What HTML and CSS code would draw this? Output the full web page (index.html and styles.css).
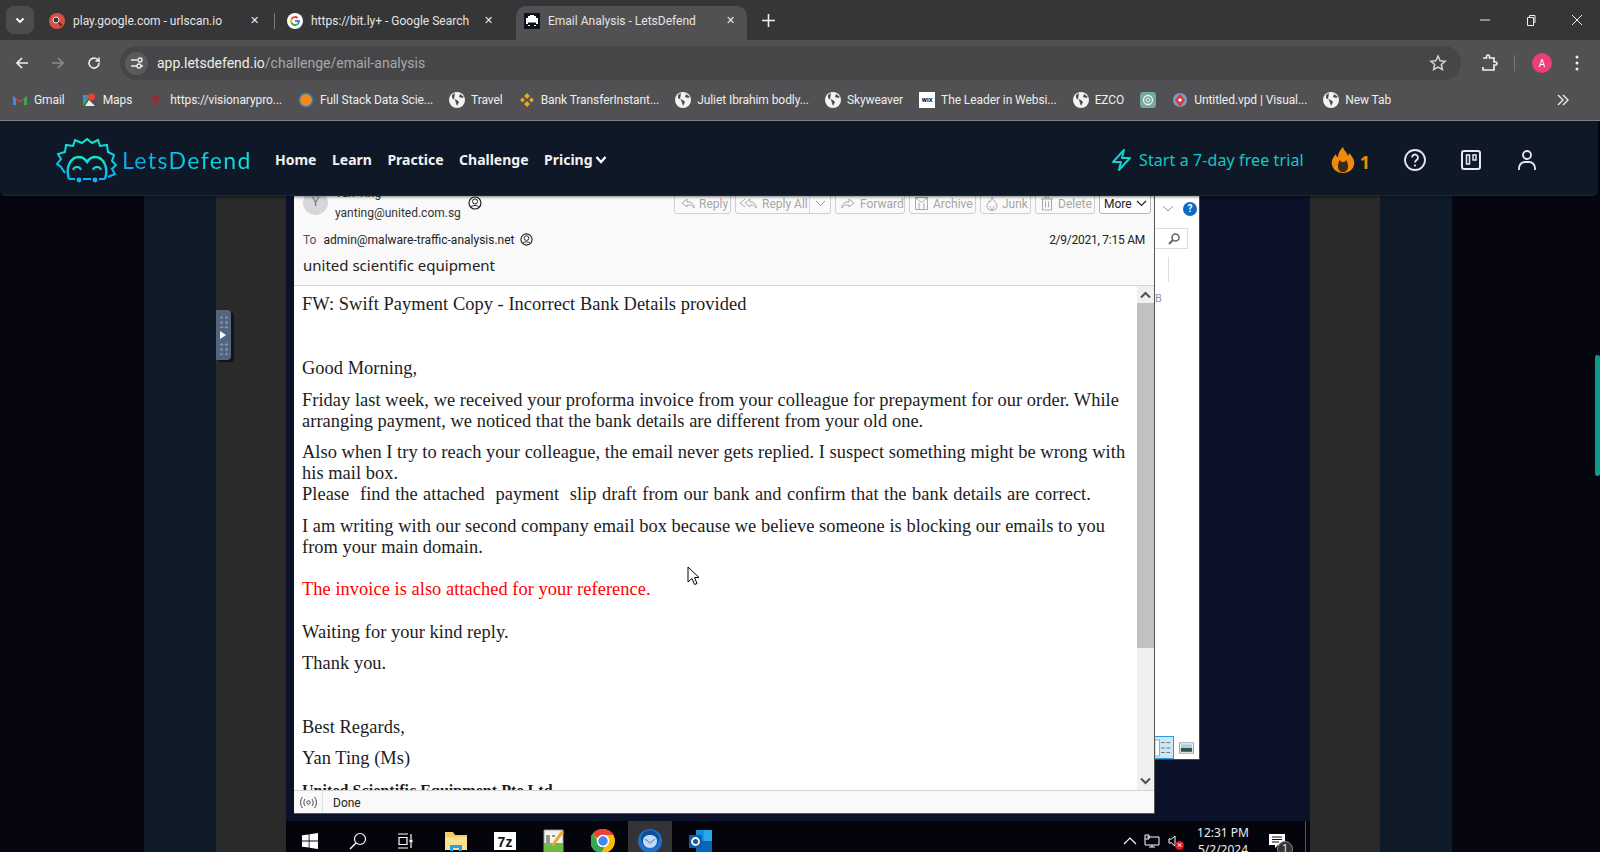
FILE: index.html
```html
<!DOCTYPE html>
<html lang="en">
<head>
    <meta charset="UTF-8">
    <title>Email Analysis - LetsDefend</title>
    <link rel="stylesheet" href="styles.css">
</head>
<body>
    <div class="tabstrip">
        <button class="tab-search"><svg width="12" height="12" viewBox="0 0 12 12"><path d="M2.500 4.500 6 8l3.500-3.500" fill="none" stroke="#fff" stroke-width="1.800"/></svg></button>
        <div class="tab">
            <svg class="fav" width="16" height="16" viewBox="0 0 16 16"><circle cx="8" cy="8" r="8" fill="#d9503f"/><circle cx="7" cy="7" r="3" fill="#35383c" stroke="#e8e8e8"/><path d="m9.500 9.500 3 3" stroke="#333" stroke-width="2"/></svg>
            <span class="tab-title">play.google.com - urlscan.io</span><span class="tab-x">✕</span>
        </div>
        <div class="tab-sep"></div>
        <div class="tab tab-two">
            <svg class="fav" width="16" height="16" viewBox="0 0 16 16"><circle cx="8" cy="8" r="8" fill="#fff"/><path d="M8 3a5 5 0 0 1 3.400 1.300L10 5.700A3 3 0 0 0 5.200 7L3.600 5.700A5 5 0 0 1 8 3z" fill="#ea4335"/><path d="M3.600 5.700 5.200 7a3 3 0 0 0 0 2L3.600 10.300a5 5 0 0 1 0-4.600z" fill="#fbbc05"/><path d="M3.600 10.300 5.200 9A3 3 0 0 0 10 10.400l1.500 1.200A5 5 0 0 1 3.600 10.300z" fill="#34a853"/><path d="M8 7h5v1.200a5 5 0 0 1-1.500 3.400L10 10.400A2 2 0 0 0 10.800 9H8z" fill="#4285f4"/></svg>
            <span class="tab-title">https://bit.ly+ - Google Search</span><span class="tab-x">✕</span>
        </div>
        <div class="tab tab-active">
            <svg class="fav" width="16" height="16" viewBox="0 0 16 16"><rect width="16" height="16" fill="#0c1420"/><path d="M6 2h4v1h2v2h2v6h-2v-1.500H4V11H2V5h2V3h2z" fill="#fff"/><path d="M4 12h2v1H4zM10 12h2v1h-2z" fill="#fff"/></svg>
            <span class="tab-title">Email Analysis - LetsDefend</span><span class="tab-x">✕</span>
        </div>
        <svg class="tab-new" width="13" height="13" viewBox="0 0 13 13"><path d="M6.500 0v13M0 6.500h13" stroke="#eee" stroke-width="1.600"/></svg>
        <div class="win-controls">
            <svg width="12" height="12" viewBox="0 0 12 12"><path d="M1 6h10" stroke="#eee"/></svg>
            <svg width="12" height="12" viewBox="0 0 12 12"><path d="M2.500 3.500h6v8h-6zM4.500 3.500v-2h5.500v7H8.500" fill="none" stroke="#eee"/></svg>
            <svg width="12" height="12" viewBox="0 0 12 12"><path d="m1 1 10 10M11 1 1 11" stroke="#eee"/></svg>
        </div>
    </div>

    <div class="toolbar">
        <svg class="nav" width="16" height="16" viewBox="0 0 16 16"><path d="M14 8H3M8 3 3 8l5 5" fill="none" stroke="#eee" stroke-width="1.700"/></svg>
        <svg class="nav" width="16" height="16" viewBox="0 0 16 16"><path d="M2 8h11M8 3l5 5-5 5" fill="none" stroke="#8b8b8d" stroke-width="1.700"/></svg>
        <svg class="nav" width="16" height="16" viewBox="0 0 16 16"><path d="M13 8a5 5 0 1 1-1.500-3.500L13 6V2.500M13 6H9.500" fill="none" stroke="#eee" stroke-width="1.600"/></svg>
        <div class="omnibox">
            <span class="site-chip"><svg width="16" height="16" viewBox="0 0 16 16"><path d="M2 5h6M12 11h2M2 11h6" stroke="#eee" stroke-width="1.400"/><circle cx="11" cy="5" r="2" fill="none" stroke="#eee" stroke-width="1.400"/><circle cx="10" cy="11" r="2" fill="none" stroke="#eee" stroke-width="1.400"/></svg></span>
            <span class="url">app.letsdefend.io<span class="url-path">/challenge/email-analysis</span></span>
            <svg class="star" width="18" height="18" viewBox="0 0 18 18"><path d="m9 2 2.100 4.700 5 .5-3.800 3.300 1.100 5L9 13l-4.400 2.500 1.100-5L1.900 7.200l5-.5z" fill="none" stroke="#d5d5d5" stroke-width="1.500"/></svg>
        </div>
        <svg class="ext" width="18" height="18" viewBox="0 0 18 18"><path d="M3 4h3.500V2.500a1.500 1.500 0 0 1 3 0V4H14v4h1.500a1.500 1.500 0 0 1 0 3H14v5H3v-3" fill="none" stroke="#eee" stroke-width="1.700"/></svg>
        <div class="tool-sep"></div>
        <span class="avatar">A</span>
        <svg class="kebab" width="4" height="16" viewBox="0 0 4 16"><circle cx="2" cy="2" r="1.500" fill="#eee"/><circle cx="2" cy="8" r="1.500" fill="#eee"/><circle cx="2" cy="14" r="1.500" fill="#eee"/></svg>
    </div>

    <div class="bookmarks">
        <span class="bm"><svg width="16" height="16" viewBox="0 0 16 16"><path d="M1 13V4l7 5 7-5v9h-3V7.500L8 10.500 4 7.500V13z" fill="#ea4335"/><path d="M1 13V4l3 2.500V13z" fill="#4285f4"/><path d="M15 13V4l-3 2.500V13z" fill="#34a853"/></svg>Gmail</span>
        <span class="bm"><svg width="16" height="16" viewBox="0 0 16 16"><path d="M2 3h6l-2 6-4 5z" fill="#34a853"/><path d="M8 8l6 6H4z" fill="#eee"/><circle cx="10.500" cy="5" r="3.500" fill="#ea4335"/><path d="M2 3h5L2 9z" fill="#4285f4"/></svg>Maps</span>
        <span class="bm"><svg width="16" height="16" viewBox="0 0 16 16"><path d="M8 1v14M4 3l4 8 4-8M3 6h10" fill="none" stroke="#a9262a" stroke-width="1.300"/></svg>https://visionarypro...</span>
        <span class="bm"><svg width="16" height="18" viewBox="0 0 16 18"><circle cx="8" cy="9" r="7.500" fill="#2a7ab8"/><circle cx="8" cy="9" r="6" fill="#f08a1d"/></svg>Full Stack Data Scie...</span>
        <span class="bm"><svg class="globe" width="16" height="16" viewBox="0 0 16 16"><circle cx="8" cy="8" r="8" fill="#f2f2f2"/><path d="M6 1 3 3v3l3 2 1 3 1 3 2-4-2-2-3-1zM11 2l-1 3 3 1 2-1z" fill="#4f4f51"/></svg>Travel</span>
        <span class="bm"><svg width="16" height="16" viewBox="0 0 16 16"><path d="M8 1 11 4 8 7 5 4zM3.500 5.500 6 8l-2.500 2.500L1 8zM12.500 5.500 15 8l-2.500 2.500L10 8zM8 9l3 3-3 3-3-3z" fill="#e5a823"/></svg>Bank TransferInstant...</span>
        <span class="bm"><svg class="globe" width="16" height="16" viewBox="0 0 16 16"><circle cx="8" cy="8" r="8" fill="#f2f2f2"/><path d="M6 1 3 3v3l3 2 1 3 1 3 2-4-2-2-3-1zM11 2l-1 3 3 1 2-1z" fill="#4f4f51"/></svg>Juliet Ibrahim bodly...</span>
        <span class="bm"><svg class="globe" width="16" height="16" viewBox="0 0 16 16"><circle cx="8" cy="8" r="8" fill="#f2f2f2"/><path d="M6 1 3 3v3l3 2 1 3 1 3 2-4-2-2-3-1zM11 2l-1 3 3 1 2-1z" fill="#4f4f51"/></svg>Skyweaver</span>
        <span class="bm"><span class="wix">WIX</span>The Leader in Websi...</span>
        <span class="bm"><svg class="globe" width="16" height="16" viewBox="0 0 16 16"><circle cx="8" cy="8" r="8" fill="#f2f2f2"/><path d="M6 1 3 3v3l3 2 1 3 1 3 2-4-2-2-3-1zM11 2l-1 3 3 1 2-1z" fill="#4f4f51"/></svg>EZCO</span>
        <span class="bm"><svg width="16" height="16" viewBox="0 0 16 16"><rect width="16" height="16" rx="3" fill="#74aa9c"/><circle cx="8" cy="8" r="4.500" fill="none" stroke="#e8f3f0" stroke-width="1.300"/><circle cx="8" cy="8" r="2" fill="none" stroke="#e8f3f0"/></svg></span>
        <span class="bm"><svg width="16" height="16" viewBox="0 0 16 16"><circle cx="8" cy="8" r="7" fill="#7b9bc4"/><path d="M8 2l5 6-5 7-5-7z" fill="#d63c3c"/><path d="M8 6l2 2-2 2-2-2z" fill="#fff"/></svg>Untitled.vpd | Visual...</span>
        <span class="bm"><svg class="globe" width="16" height="16" viewBox="0 0 16 16"><circle cx="8" cy="8" r="8" fill="#f2f2f2"/><path d="M6 1 3 3v3l3 2 1 3 1 3 2-4-2-2-3-1zM11 2l-1 3 3 1 2-1z" fill="#4f4f51"/></svg>New Tab</span>
        <svg class="more-bm" width="14" height="14" viewBox="0 0 14 14"><path d="m2 2 5 5-5 5M7 2l5 5-5 5" fill="none" stroke="#eee" stroke-width="1.400"/></svg>
    </div>

    <div class="page">
        <header class="site-nav">
            <div class="logo">
                <svg width="62" height="46" viewBox="0 0 62 46">
                    <defs><linearGradient id="lg" x1="0" y1="0" x2="0" y2="1"><stop offset="0" stop-color="#10e8cc"/><stop offset="1" stop-color="#06b4f8"/></linearGradient></defs>
                    <path d="M9 36 5 30l-4-3 4-5-3-5 7-2 1-7 7 1 2-6 7 3 5-4 5 4 6-3 2 6 7-1 1 7 6 3-2 6 4 4-4 4 3 5-7 3" fill="none" stroke="url(#lg)" stroke-width="2"/>
                    <path d="M13 42c-4-12 2-22 10-22 4 0 6 2 8 5 2-3 4-5 8-5 8 0 14 10 10 22" fill="none" stroke="url(#lg)" stroke-width="2.400"/>
                    <path d="M17 33c1-4 7-4 8 0M37 33c1-4 7-4 8 0" fill="none" stroke="url(#lg)" stroke-width="2.200"/>
                    <path d="M13 42h6M27 42h8M43 42h6" stroke="#06b4f8" stroke-width="2.200"/>
                    <circle cx="23" cy="43" r="2.400" fill="#06b4f8"/><circle cx="39" cy="43" r="2.400" fill="#06b4f8"/>
                </svg>
                <span class="logo-text">LetsDefend</span>
            </div>
            <nav class="nav-links">
                <span>Home</span><span>Learn</span><span>Practice</span><span>Challenge</span>
                <span class="pricing">Pricing<svg width="12" height="10" viewBox="0 0 12 10"><path d="m1.500 2 4.500 5 4.500-5" fill="none" stroke="#fff" stroke-width="2.400"/></svg></span>
            </nav>
            <div class="nav-right">
                <span class="trial"><svg width="22" height="24" viewBox="0 0 22 24"><path d="M13 2 2 14h8l-2 8 11-12h-8z" fill="none" stroke="#12d3cc" stroke-width="2" stroke-linejoin="round"/></svg>Start a 7-day free trial</span>
                <span class="streak"><svg width="26" height="28" viewBox="0 0 26 28"><path d="M13 1c1 4 4 5 5 9 1-1 1-3 1-3 4 4 6 8 5 12-1 5-6 8-11 8S3 24 2 19C1 15 3 11 6 8c0 2 1 3 2 3 0-4 2-7 5-10z" fill="#f08a0c"/><path d="M13 26c-3 0-5-2-5-6 0-3 1-5 2-6 1 2 2 2 3 2 1 0 2 0 3-2 1 1 2 3 2 6 0 4-2 6-5 6z" fill="#3a2a16"/></svg><b>1</b></span>
                <svg class="nav-ico" width="24" height="24" viewBox="0 0 24 24"><circle cx="12" cy="12" r="10" fill="none" stroke="#e6e9ee" stroke-width="1.800"/><path d="M9 9.500a3 3 0 1 1 4.500 2.600c-1 .6-1.500 1.200-1.500 2.400" fill="none" stroke="#e6e9ee" stroke-width="1.800"/><circle cx="12" cy="17.500" r="1.100" fill="#e6e9ee"/></svg>
                <svg class="nav-ico" width="24" height="24" viewBox="0 0 24 24"><rect x="3" y="3" width="18" height="18" rx="2" fill="none" stroke="#e6e9ee" stroke-width="2"/><path d="M7.500 7h3v9h-3zM14 7h3v5h-3z" fill="none" stroke="#e6e9ee" stroke-width="1.500"/></svg>
                <svg class="nav-ico" width="24" height="24" viewBox="0 0 24 24"><circle cx="12" cy="7" r="4" fill="none" stroke="#e6e9ee" stroke-width="1.800"/><path d="M4 22v-2a6 6 0 0 1 6-6h4a6 6 0 0 1 6 6v2" fill="none" stroke="#e6e9ee" stroke-width="1.800"/></svg>
            </div>
        </header>

        <div class="stage">
            <div class="band band-black"></div>
            <div class="band band-slate"></div>
            <div class="band band-grey"></div>
            <div class="desktop">
                <div class="back-window">
                    <svg class="bw-chev" width="12" height="8" viewBox="0 0 12 8"><path d="m1 1 5 5 5-5" fill="none" stroke="#999"/></svg>
                    <span class="bw-help">?</span>
                    <div class="bw-search"><svg width="14" height="14" viewBox="0 0 14 14"><circle cx="8.500" cy="5.500" r="3.500" fill="none" stroke="#666" stroke-width="1.600"/><path d="M6 8 2 12" stroke="#666" stroke-width="2"/></svg></div>
                    <div class="bw-rule"></div>
                    <span class="bw-b">B</span>
                    <div class="bw-views">
                        <span class="bw-view-on"><svg width="18" height="20" viewBox="0 0 20 22"><rect x="1" y="2" width="5" height="18" fill="#fff" stroke="#999"/><path d="M8 5h4M14 5h4M8 11h4M14 11h4M8 16h4M14 16h4" stroke="#666"/></svg></span>
                        <svg width="15" height="12" viewBox="0 0 16 12"><rect x=".5" y=".5" width="15" height="11" fill="#fff" stroke="#999"/><rect x="2" y="2" width="12" height="8" fill="#a8d0e8"/><rect x="2" y="6" width="12" height="4" fill="#2f5548"/></svg>
                    </div>
                </div>
                <div class="mail-window">
                    <div class="mail-head">
                        <div class="mail-from">
                            <span class="sender-pic">Y</span>
                            <div class="sender-lines">
                                <span class="sender-name">Yan Ting</span>
                                <span class="sender-mail">yanting@united.com.sg</span>
                            </div>
                            <svg class="contact" width="14" height="14" viewBox="0 0 14 14"><circle cx="7" cy="7" r="6" fill="none" stroke="#222" stroke-width="1.200"/><circle cx="7" cy="5.500" r="2.500" fill="none" stroke="#222"/><path d="M3 11c1-2 7-2 8 0" fill="none" stroke="#222"/></svg>
                            <div class="mail-actions">
                                <span class="act act-reply"><svg width="15" height="14" viewBox="0 0 15 14"><path d="M7 2 2 6l5 4V8h3c2 0 3 1 4 3 0-4-2-6-5-6H7z" fill="none" stroke="#aaa"/></svg>Reply</span>
                                <span class="act act-split"><span class="act-main"><svg width="19" height="14" viewBox="0 0 19 14"><path d="M6 2 1 6l5 4M11 2 6 6l5 4V8h2c2 0 3 1 4 3 0-4-2-6-5-6h-1z" fill="none" stroke="#aaa"/></svg>Reply All</span><span class="act-drop"><svg width="11" height="7" viewBox="0 0 11 7"><path d="m1 1 4.500 4.500L10 1" fill="none" stroke="#999"/></svg></span></span>
                                <span class="act act-forward"><svg width="15" height="14" viewBox="0 0 15 14"><path d="m8 2 5 4-5 4V8H5c-2 0-3 1-4 3 0-4 2-6 5-6h2z" fill="none" stroke="#aaa"/></svg>Forward</span>
                                <span class="act act-archive"><svg width="15" height="15" viewBox="0 0 15 15"><path d="M1.500 1.500h12v12h-12zM1.500 1.500l6 5 6-5M5 7v6M10 7v6" fill="none" stroke="#aaa"/></svg>Archive</span>
                                <span class="act act-junk"><svg width="14" height="15" viewBox="0 0 14 15"><path d="M7 1c0 3 5 5 5 9a5 4.500 0 0 1-10 0c0-3 2-3 2-5 1 0 1 1 1 1 1-2 2-3 2-5zM7 14c-1-2-2-3-2-4M7 14c1-2 2-3 2-4" fill="none" stroke="#aaa"/></svg>Junk</span>
                                <span class="act act-delete"><svg width="14" height="15" viewBox="0 0 14 15"><path d="M1 3h12M5 3V1h4v2M2.500 3v11h9V3M5.500 5.500v6M8.500 5.500v6" fill="none" stroke="#aaa"/></svg>Delete</span>
                                <span class="act act-more">More<svg width="11" height="7" viewBox="0 0 11 7"><path d="m1 1 4.500 4.500L10 1" fill="none" stroke="#222" stroke-width="1.200"/></svg></span>
                            </div>
                        </div>
                        <div class="mail-to">
                            <span class="to-label">To</span>
                            <span class="to-addr">admin@malware-traffic-analysis.net</span>
                            <svg width="13" height="13" viewBox="0 0 14 14"><circle cx="7" cy="7" r="6" fill="none" stroke="#222" stroke-width="1.200"/><circle cx="7" cy="5.500" r="2.500" fill="none" stroke="#222"/><path d="M3 11c1-2 7-2 8 0" fill="none" stroke="#222"/></svg>
                            <span class="mail-date">2/9/2021, 7:15 AM</span>
                        </div>
                        <div class="mail-subject">united scientific equipment</div>
                    </div>
                    <div class="mail-mid">
                        <div class="mail-body">
                            <p>FW: Swift Payment Copy - Incorrect Bank Details provided</p>
                            <p class="gap-large">Good Morning,</p>
                            <p>Friday last week, we received your proforma invoice from your colleague for prepayment for our order. While<br>arranging payment, we noticed that the bank details are different from your old one.</p>
                            <p>Also when I try to reach your colleague, the email never gets replied. I suspect something might be wrong with<br>his mail box.<br><span class="spaced">Please&nbsp; find the attached&nbsp; payment&nbsp; slip draft from our bank and confirm that the bank details are correct.</span></p>
                            <p>I am writing with our second company email box because we believe someone is blocking our emails to you<br>from your main domain.</p>
                            <p class="warn">The invoice is also attached for your reference.</p>
                            <p class="gap-small">Waiting for your kind reply.</p>
                            <p>Thank you.</p>
                            <p class="gap-large tight">Best Regards,</p>
                            <p>Yan Ting (Ms)</p>
                            <p class="company">United Scientific Equipment Pte Ltd</p>
                        </div>
                        <div class="mail-scroll">
                            <svg width="11" height="8" viewBox="0 0 11 8"><path d="m1 6.500 4.500-4.500L10 6.500" fill="none" stroke="#505050" stroke-width="2"/></svg>
                            <div class="mail-track"><div class="mail-thumb"></div></div>
                            <svg width="11" height="8" viewBox="0 0 11 8"><path d="m1 1.500 4.500 4.500L10 1.500" fill="none" stroke="#505050" stroke-width="2"/></svg>
                        </div>
                    </div>
                    <div class="mail-status">
                        <span class="status-ico"><svg width="17" height="13" viewBox="0 0 17 13"><circle cx="8.500" cy="6.500" r="1.700" fill="none" stroke="#444"/><path d="M5 3c-1.500 2-1.500 5 0 7M12 3c1.500 2 1.500 5 0 7M2.500 1C0 4 0 9 2.500 12M14.500 1C17 4 17 9 14.500 12" fill="none" stroke="#444"/></svg></span>
                        <span class="status-text">Done</span>
                    </div>
                </div>
                <svg class="cursor" width="14" height="21" viewBox="0 0 14 21"><path d="M1 1v15l4-3.500 2.500 6 2.500-1-2.500-6H12z" fill="#fff" stroke="#000"/></svg>
                <div class="taskbar">
                    <svg class="tb-win" width="16" height="16" viewBox="0 0 16 16"><path d="M0 2.300 6.700 1.400V7.600H0zM7.500 1.300 16 0V7.600H7.500zM0 8.400H6.700V14.600L0 13.700zM7.500 8.400H16V16L7.500 14.700z" fill="#fff"/></svg>
                    <svg class="tb-search" width="18" height="18" viewBox="0 0 18 18"><circle cx="11" cy="7" r="5.500" fill="none" stroke="#fff" stroke-width="1.200"/><path d="M7 11 1 17" stroke="#fff" stroke-width="1.400"/></svg>
                    <svg class="tb-view" width="16" height="16" viewBox="0 0 16 16"><path d="M1 1h10M1 15h10M2 4.500h8v7H2z" fill="none" stroke="#fff" stroke-width="1.200"/><path d="M14 1v5M14 10v5" stroke="#fff" stroke-width="1.200"/><rect x="12.500" y="6.500" width="3" height="3" fill="#fff"/></svg>
                    <svg class="tb-files" width="22" height="20" viewBox="0 0 22 20"><path d="M0 1h8l2 3h12v15H0z" fill="#f4cd68"/><path d="M0 6h22v13H0z" fill="#fbe08f"/><path d="M5 14h12v6H14v-3H8v3H5z" fill="#2aa3dc"/></svg>
                    <span class="tb-7z"><b>7</b>z</span>
                    <svg class="tb-notes" width="22" height="24" viewBox="0 0 22 24"><path d="M1 1h19v22H1z" fill="#f4f4ec" stroke="#999"/><path d="M1 14h19v9H1z" fill="#6dbb45"/><path d="M4 6v8M6 6v8M9 7h3" stroke="#333"/><path d="M8 16 18 2l3 1-10 14z" fill="#e8a73a"/></svg>
                    <svg class="tb-chrome" width="24" height="24" viewBox="0 0 24 24"><circle cx="12" cy="12" r="12" fill="#fbbc05"/><path d="M12 0a12 12 0 0 1 10.400 6H12a6 6 0 0 0-5.600 3.800L2 4a12 12 0 0 1 10-4z" fill="#ea4335"/><path d="M2 4l4.800 8.400a6 6 0 0 0 6.800 5.300L10 24A12 12 0 0 1 2 4z" fill="#34a853"/><circle cx="12" cy="12" r="5.500" fill="#4285f4" stroke="#fff" stroke-width="1.500"/></svg>
                    <span class="tb-active"><svg width="24" height="24" viewBox="0 0 24 24"><circle cx="12" cy="12" r="12" fill="#1f6fc4"/><circle cx="12" cy="10" r="9" fill="#0b4f9e"/><path d="M5 12c0-4 3-6 7-6s7 2 7 6c0 4-3 7-7 7s-7-3-7-7z" fill="#c6dcf5"/><path d="M7 10l5 4 5-4" fill="none" stroke="#6aa0dc" stroke-width="1.500"/></svg></span>
                    <svg class="tb-outlook" width="24" height="24" viewBox="0 0 24 24"><rect x="7" y="1" width="16" height="22" fill="#1490df"/><rect x="15" y="1" width="8" height="11" fill="#28a8ea"/><path d="M7 12h16v11H7z" fill="#0a64b8"/><rect y="6" width="13" height="13" fill="#0f5fa8"/><circle cx="6.500" cy="12.500" r="3.500" fill="none" stroke="#fff" stroke-width="1.800"/></svg>
                    <div class="tray">
                        <svg width="14" height="8" viewBox="0 0 14 8"><path d="m1 7 6-6 6 6" fill="none" stroke="#fff" stroke-width="1.100"/></svg>
                        <svg class="tray-net" width="16" height="14" viewBox="0 0 16 14"><path d="M3 3h12v8H1V1h4v4H1M8 11v2M5 13h6" fill="none" stroke="#fff"/></svg>
                        <span class="vol"><svg width="8" height="12" viewBox="0 0 8 12"><path d="M1 4h2.500L7 1v10L3.500 8H1z" fill="none" stroke="#fff"/></svg><span class="vol-x">×</span></span>
                        <span class="clock"><span>12:31 PM</span><span>5/2/2024</span></span>
                        <span class="notif"><svg width="16" height="14" viewBox="0 0 16 14"><path d="M0 0h16v11H9l-3 3v-3H0z" fill="#fff"/><path d="M3 3h10M3 5.500h10M3 8h7" stroke="#111"/></svg><span class="notif-badge">1</span></span>
                    </div>
                </div>
            </div>
            <div class="band band-grey"></div>
            <div class="band band-slate"></div>
            <div class="band band-black band-last"><div class="page-scroll"></div></div>
            <div class="drawer-handle">
                <span class="dots"></span>
                <svg width="7" height="8" viewBox="0 0 7 8"><path d="M0 0 6 4 0 8z" fill="#fff"/></svg>
                <span class="dots"></span>
            </div>
        </div>
    </div>
</body>
</html>
```
FILE: styles.css
```css
* {
    box-sizing: border-box;
}
html, body {
    margin: 0;
    height: 852px;
    overflow: hidden;
}
body {
    font-family: Roboto, "Noto Sans", sans-serif;
    display: flex;
    flex-direction: column;
    background: #05060f;
}

/* chrome */
.tabstrip {
    height: 40px;
    background: #363638;
    display: flex;
    align-items: flex-end;
    position: relative;
}
.tab-search {
    width: 28px;
    height: 28px;
    margin: 0 3px 6px 6px;
    border: none;
    border-radius: 8px;
    background: #4d4d50;
    padding: 0;
    display: flex;
    align-items: center;
    justify-content: center;
}
.tab {
    width: 237px;
    height: 34px;
    display: flex;
    align-items: center;
    padding: 0 12px 5px 12px;
    color: #e4e4e4;
    font-size: 12px;
}
.fav {
    flex: none;
    margin-right: 8px;
}
.tab-title {
    flex: 1;
    white-space: nowrap;
}
.tab-x {
    font-size: 11px;
    color: #e8e8e8;
    width: 12px;
}
.tab-sep {
    width: 1px;
    height: 16px;
    background: #777;
    margin: 0 0 11px 0;
}
.tab-two {
    width: 233px;
}
.tab-active {
    width: 231px;
    margin-left: 8px;
    background: #515153;
    border-radius: 10px 10px 0 0;
    padding: 0 9px 5px 8px;
}
.tab-new {
    margin: 0 0 13px 15px;
}
.win-controls {
    margin-left: auto;
    display: flex;
    gap: 34px;
    padding: 0 17px 14px 0;
}
.toolbar {
    height: 40px;
    background: #515153;
    display: flex;
    align-items: center;
    padding: 6px 0 0 14px;
}
.nav {
    margin-right: 20px;
}
.omnibox {
    width: 1341px;
    height: 34px;
    margin-left: -2px;
    border-radius: 17px;
    background: #464648;
    display: flex;
    align-items: center;
    padding: 0 14px 0 5px;
}
.site-chip {
    width: 23px;
    height: 23px;
    border-radius: 50%;
    background: #5a5a5c;
    display: flex;
    align-items: center;
    justify-content: center;
    margin-right: 9px;
}
.url {
    color: #eee;
    font-size: 14px;
}
.url-path {
    color: #a8a8a8;
}
.star {
    margin-left: auto;
}
.ext {
    margin-left: 19px;
}
.tool-sep {
    width: 1px;
    height: 16px;
    background: #777;
    margin-left: 16px;
}
.avatar {
    width: 20px;
    height: 20px;
    border-radius: 50%;
    background: #ea3f78;
    color: #fff;
    font-size: 10px;
    display: flex;
    align-items: center;
    justify-content: center;
    margin-left: 17px;
}
.kebab {
    margin-left: 23px;
}
.bookmarks {
    height: 41px;
    background: #515153;
    border-bottom: 1px solid #8a8a8a;
    display: flex;
    align-items: center;
    padding-left: 12px;
    color: #eee;
    font-size: 12px;
    letter-spacing: -.08px;
}
.bm {
    display: flex;
    align-items: center;
    gap: 6px;
    margin-right: 16px;
    white-space: nowrap;
}
.wix {
    width: 16px;
    height: 16px;
    background: #fff;
    color: #000;
    font-size: 6px;
    font-weight: 700;
    line-height: 16px;
    text-align: center;
}
.more-bm {
    margin-left: auto;
    margin-right: 30px;
}

/* site */
.page {
    flex: 1;
    position: relative;
    display: flex;
    flex-direction: column;
    min-height: 0;
}
.site-nav {
    height: 75px;
    flex: none;
    background: #0f1827;
    border-bottom: 1px solid #1c2636;
    border-radius: 0 0 6px 6px;
    margin-right: 2px;
    display: flex;
    align-items: center;
    padding: 3px 59px 0 56px;
    z-index: 2;
    box-shadow: 0 1px 3px #00000080;
    font-family: "Noto Sans", sans-serif;
}
.logo {
    display: flex;
    align-items: center;
    width: 219px;
}
.logo-text {
    font-family: Lato, sans-serif;
    font-size: 23px;
    letter-spacing: 1.400px;
    margin-left: 4px;
    background: linear-gradient(90deg, #08a8f0, #0ce8dc);
    -webkit-background-clip: text;
    background-clip: text;
    color: transparent;
}
.nav-links {
    display: flex;
    gap: 15.500px;
    color: #f2f2f2;
    font-size: 14px;
    font-weight: 700;
}
.pricing {
    display: flex;
    align-items: center;
    gap: 2px;
}
.nav-right {
    margin-left: auto;
    display: flex;
    align-items: center;
}
.trial {
    display: flex;
    align-items: center;
    gap: 6px;
    color: #12c9c4;
    font-size: 16px;
    letter-spacing: .1px;
    margin-right: 26px;
}
.streak {
    display: flex;
    align-items: center;
    gap: 4px;
    color: #f08a0c;
    font-size: 18px;
    margin-right: 33px;
}
.streak b {
    padding-top: 4px;
}
.nav-ico {
    margin-right: 32px;
}
.nav-ico:last-child {
    margin-right: 0;
}
.stage {
    flex: 1;
    display: flex;
    position: relative;
    min-height: 0;
    overflow: hidden;
}
.band {
    flex: none;
}
.band-black {
    width: 144px;
    background: #05060f;
}
.band-slate {
    width: 72px;
    background: #0f1a28;
}
.band-grey {
    width: 70px;
    background: #2a2a2a;
}
.band-last {
    width: 148px;
    position: relative;
}
.page-scroll {
    position: absolute;
    right: 0;
    top: 159px;
    width: 5px;
    height: 121px;
    background: #0c9b8b;
    border-radius: 3px;
}

/* vm desktop */
.desktop {
    width: 1024px;
    background: #0a1128;
    position: relative;
}
.back-window {
    position: absolute;
    left: 868px;
    top: 0;
    width: 46px;
    height: 564px;
    background: #fff;
    border: solid #444;
    border-width: 0 1px 1px 0;
}
.bw-chev {
    position: absolute;
    left: 8px;
    top: 9px;
}
.bw-help {
    position: absolute;
    right: 2px;
    top: 6px;
    width: 14px;
    height: 14px;
    border-radius: 50%;
    background: #0f6cc4;
    color: #fff;
    font-size: 10px;
    font-weight: 700;
    line-height: 14px;
    text-align: center;
}
.bw-search {
    position: absolute;
    left: 0;
    top: 32px;
    width: 34px;
    height: 21px;
    border: solid #ddd;
    border-width: 1px 1px 1px 0;
    display: flex;
    align-items: center;
    justify-content: flex-end;
    padding-right: 6px;
}
.bw-rule {
    position: absolute;
    left: 14px;
    top: 61px;
    width: 1px;
    height: 25px;
    background: #ddd;
}
.bw-b {
    position: absolute;
    left: 1px;
    top: 96px;
    color: #8a9aa8;
    font-size: 11px;
}
.bw-views {
    position: absolute;
    left: 0;
    bottom: 0;
    height: 23px;
    display: flex;
    align-items: center;
    gap: 5px;
}
.bw-view-on {
    width: 20px;
    height: 23px;
    background: #cce8f6;
    border: solid #2b9bd8;
    border-width: 1px 1px 1px 0;
    display: flex;
    align-items: center;
    overflow: hidden;
}
.mail-window {
    position: absolute;
    left: 8px;
    top: -8px;
    width: 861px;
    height: 626px;
    background: #fff;
    border: solid #555;
    border-width: 0 1px 1px 0;
    display: flex;
    flex-direction: column;
}
.mail-head {
    height: 98px;
    flex: none;
    background: #f9f9f9;
    border-bottom: 1px solid #d4d4d4;
    color: #222;
}
.mail-from {
    height: 42px;
    display: flex;
    position: relative;
    padding: 1px 3px 0 9px;
}
.sender-pic {
    width: 25px;
    height: 25px;
    margin-top: 1px;
    border-radius: 50%;
    background: #d6d6dc;
    color: #777;
    font-size: 12px;
    text-align: center;
    line-height: 25px;
}
.sender-lines {
    display: flex;
    flex-direction: column;
    margin: -4px 0 0 7px;
    font-size: 12px;
    line-height: 16px;
    color: #333;
}
.sender-mail {
    margin-top: 4px;
}
.contact {
    margin: 7px 0 0 7px;
}
.mail-actions {
    margin-left: auto;
    height: 21px;
    margin-top: 4px;
    display: flex;
    gap: 4px;
}
.act {
    width: 57px;
    height: 21px;
    border: 1px solid #d0d0d0;
    border-radius: 3px;
    background: #fafafa;
    color: #a6a6a6;
    font-size: 12px;
    white-space: nowrap;
    display: flex;
    align-items: center;
    gap: 4px;
    padding-left: 5px;
}
.act-split {
    width: 96px;
    padding: 0;
    gap: 0;
}
.act-main {
    display: flex;
    align-items: center;
    gap: 4px;
    width: 74px;
    flex: none;
    padding-left: 3px;
    height: 100%;
    border-right: 1px solid #d8d8d8;
}
.act-drop {
    flex: 1;
    display: flex;
    align-items: center;
    justify-content: center;
}
.act-forward {
    width: 70px;
}
.act-archive {
    width: 67px;
    padding-left: 4px;
}
.act-junk {
    width: 51px;
    padding-left: 4px;
    gap: 3px;
}
.act-delete {
    width: 60px;
    padding-left: 4px;
}
.act-more {
    width: 52px;
    color: #222;
    background: #fff;
    padding-left: 4px;
    border-color: #b8b8b8;
}
.mail-to {
    height: 19px;
    display: flex;
    align-items: center;
    gap: 5px;
    padding: 0 9px;
    font-size: 12px;
}
.to-label {
    color: #555;
    margin-right: 2px;
}
.mail-date {
    margin-left: auto;
    letter-spacing: -.25px;
}
.mail-subject {
    padding: 6px 9px 0;
    font-family: "Noto Sans", sans-serif;
    font-size: 15px;
    line-height: 21px;
}
.mail-mid {
    flex: 1;
    display: flex;
    min-height: 0;
}
.mail-body {
    flex: 1;
    overflow: hidden;
    padding: 8px 0 0 8px;
    font-family: "Liberation Serif", serif;
    font-size: 18.400px;
    letter-spacing: .05px;
    line-height: 21px;
    color: #1c1c24;
}
.mail-body p {
    margin: 0 0 10.500px;
    white-space: nowrap;
}
.spaced {
    word-spacing: .7px;
}
.mail-body .gap-large {
    margin-top: 43px;
}
.mail-body .tight {
    margin-bottom: 9.500px;
}
.mail-body .warn {
    color: #f00;
    margin: 21px 0 0;
}
.mail-body .gap-small {
    margin-top: 22px;
}
.mail-body .company {
    font-size: 16px;
    font-weight: 700;
    margin-top: 11px;
}
.mail-scroll {
    width: 17px;
    flex: none;
    background: #f0f0f0;
    display: flex;
    flex-direction: column;
    align-items: center;
    justify-content: space-between;
    padding: 5px 0;
}
.mail-track {
    flex: 1;
    width: 100%;
    margin: 1px 0;
    padding-top: 3px;
}
.mail-thumb {
    height: 345px;
    background: #c1c1c1;
}
.mail-status {
    height: 23px;
    flex: none;
    background: #f9f9f9;
    border-top: 1px solid #d4d4d4;
    display: flex;
    align-items: center;
    font-size: 12px;
    color: #222;
}
.status-ico {
    width: 29px;
    height: 100%;
    border-right: 1px solid #e2e2e2;
    display: flex;
    align-items: center;
    justify-content: center;
}
.status-text {
    margin-left: 10px;
    padding-top: 1px;
}
.cursor {
    position: absolute;
    left: 401px;
    top: 370px;
}
.taskbar {
    position: absolute;
    left: 0;
    right: 0;
    bottom: -9px;
    height: 40px;
    background: #04040c;
    display: flex;
    align-items: center;
    color: #eee;
}
.taskbar::after {
    content: "";
    position: absolute;
    right: 4px;
    top: 0;
    bottom: 0;
    width: 1px;
    background: #555;
}
.tb-win {
    margin-left: 16px;
}
.tb-search {
    margin-left: 31px;
}
.tb-view {
    margin-left: 30px;
}
.tb-files {
    margin-left: 32px;
}
.tb-7z {
    width: 22px;
    height: 18px;
    margin-left: 27px;
    background: #fff;
    color: #111;
    font-family: "Liberation Sans", sans-serif;
    font-size: 14px;
    font-weight: 700;
    line-height: 16px;
    text-align: center;
    border: 2px solid #fff;
}
.tb-notes {
    margin-left: 27px;
}
.tb-chrome {
    margin-left: 26px;
}
.tb-active {
    flex: none;
    width: 44px;
    height: 100%;
    margin-left: 13px;
    background: #333338;
    display: flex;
    align-items: center;
    justify-content: center;
}
.tb-outlook {
    margin-left: 17px;
}
.tray {
    margin-left: auto;
    display: flex;
    align-items: center;
    margin-right: 25px;
}
.tray-net {
    margin-left: 7px;
}
.vol {
    position: relative;
    display: flex;
    width: 16px;
    margin-left: 8px;
}
.vol-x {
    position: absolute;
    right: 0;
    bottom: -3px;
    width: 9px;
    height: 9px;
    border-radius: 50%;
    background: #e81123;
    color: #fff;
    font-size: 9px;
    line-height: 9px;
    text-align: center;
}
.clock {
    display: flex;
    flex-direction: column;
    align-items: center;
    font-size: 12px;
    line-height: 17px;
    margin: 0 20px 0 13px;
    font-family: "Noto Sans", sans-serif;
}
.notif {
    position: relative;
    display: flex;
}
.notif-badge {
    position: absolute;
    left: 8px;
    top: 7px;
    width: 16px;
    height: 16px;
    border-radius: 50%;
    background: #333;
    border: 1px solid #888;
    font-size: 10px;
    line-height: 14px;
    text-align: center;
}
.drawer-handle {
    position: absolute;
    left: 216px;
    top: 114px;
    width: 15px;
    height: 50px;
    background: #54657f;
    border-radius: 0 4px 4px 0;
    box-shadow: 3px 2px 0 #141414;
    display: flex;
    flex-direction: column;
    align-items: center;
    justify-content: center;
    gap: 3px;
}
.dots {
    width: 9px;
    height: 13px;
    background-image: radial-gradient(#8494ac 1px, transparent 1.300px);
    background-size: 5px 5px;
}
```
